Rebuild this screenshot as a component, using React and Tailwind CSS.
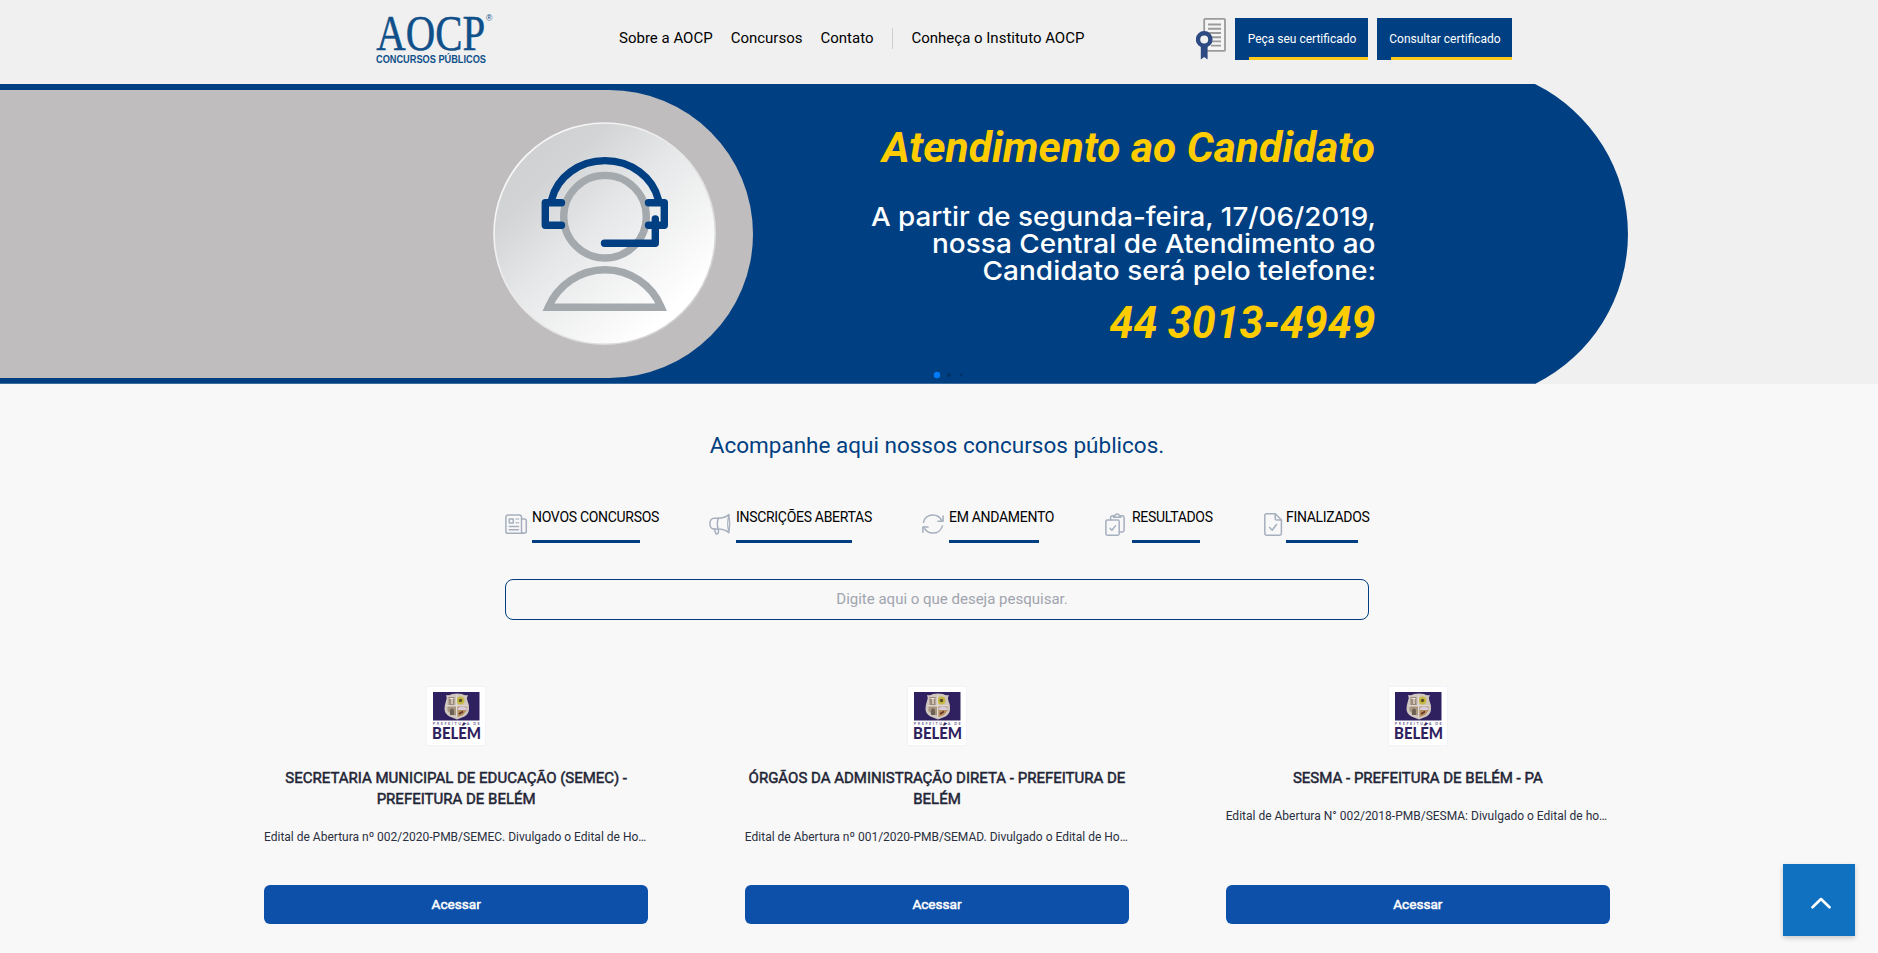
const NAV = ["Sobre a AOCP", "Concursos", "Contato"];

const CARDS = [
  {
    title: "SECRETARIA MUNICIPAL DE EDUCAÇÃO (SEMEC) - PREFEITURA DE BELÉM",
    text: "Edital de Abertura nº 002/2020-PMB/SEMEC. Divulgado o Edital de Ho…",
  },
  {
    title: "ÓRGÃOS DA ADMINISTRAÇÃO DIRETA - PREFEITURA DE BELÉM",
    text: "Edital de Abertura nº 001/2020-PMB/SEMAD. Divulgado o Edital de Ho…",
  },
  {
    title: "SESMA - PREFEITURA DE BELÉM - PA",
    text: "Edital de Abertura N° 002/2018-PMB/SESMA: Divulgado o Edital de ho…",
  },
];

function TabIcon({ children, width = 22, height = 20 }) {
  return (
    <svg
      width={width}
      height={height}
      viewBox={`0 0 ${width} ${height}`}
      className="shrink-0 overflow-visible"
      fill="none"
      stroke="#a6afbe"
      strokeWidth="1.5"
      strokeLinecap="round"
      strokeLinejoin="round"
    >
      {children}
    </svg>
  );
}

const NewsIcon = () => (
  <TabIcon>
    <path d="M3 .9h11.5a2 2 0 0 1 2 2v14.4a2 2 0 0 0 2 2H3a2.1 2.1 0 0 1-2.1-2.1V3A2.1 2.1 0 0 1 3 .9z" />
    <path d="M16.5 4.9h3a1.8 1.8 0 0 1 1.8 1.8v10.6a2 2 0 0 1-2 2h-1" />
    <rect x="4.3" y="5" width="4" height="4" />
    <path d="M11.3 5h.4M13.3 5h.2M11.3 8.8h.4M13.3 8.8h.2M4.3 12.4h9.2M4.3 15.7h9.2" />
  </TabIcon>
);

const MegaphoneIcon = () => (
  <TabIcon>
    <path d="M9.3 4.2H5.2C2.6 4.2 .9 6.7 .9 9.6s1.7 5.500 4.300 5.500h4.100" />
    <path d="M9.300 4.200C8.100 7.500 8.100 11.700 9.300 15.100c4.200 0 7.700 1.200 10.600 3.500M9.300 4.200C13.500 4.200 17 3 19.900 .6" />
    <path d="M19.900 .6C18.400 6.200 18.400 12.800 19.900 18.600c1.100-5.800 1.100-12.400 0-18z" strokeWidth="1.200" />
    <path d="M5.400 15.200l1.200 3.900a1.500 1.500 0 0 0 2.800-.5v-3.300" />
  </TabIcon>
);

const RefreshIcon = () => (
  <TabIcon>
    <path d="M1.500 8.300C2.500 3.900 6.200 .9 10.800 .9c4 0 7.500 2.400 9 6" />
    <path d="M21.100 2v5.200h-5.200" />
    <path d="M20.400 11.900c-1.100 4.200-4.900 7.200-9.400 7.200-4 0-7.500-2.300-9-5.900" />
    <path d="M.9 18.300v-5.200h5.200" />
  </TabIcon>
);

const ResultsIcon = () => (
  <TabIcon width={20} height={23}>
    <rect x=".9" y="7" width="13.300" height="15.200" rx="1.400" />
    <path d="M5.600 6.800V4.400A1.700 1.700 0 0 1 7.300 2.700h1.200M15.800 2.700h1.600a1.700 1.700 0 0 1 1.700 1.700v12.800a1.700 1.700 0 0 1-1.700 1.700h-3" />
    <path d="M8.500 4.300V2.900h1.400a2.300 2.300 0 0 1 4.500 0h1.400v1.400z" />
    <path d="M5 15.300l1.900 1.900 3.500-4.300" />
  </TabIcon>
);

const DoneIcon = () => (
  <TabIcon width={18} height={23}>
    <path d="M2.400 .8h8.800l6.200 6.200v13.600a1.600 1.600 0 0 1-1.600 1.600H2.400A1.600 1.600 0 0 1 .8 20.600V2.400A1.600 1.600 0 0 1 2.400 .8z" />
    <path d="M11.200 .8v4.600A1.600 1.600 0 0 0 12.800 7h4.600M5.600 14.600l2.600 2.700 4.300-5.800" />
  </TabIcon>
);

const TABS = [
  { label: "NOVOS CONCURSOS", Icon: NewsIcon, box: "w-[127px] ml-[5px]", bar: "w-[108px]", gap: "" },
  { label: "INSCRIÇÕES ABERTAS", Icon: MegaphoneIcon, box: "w-[136px] ml-[5px]", bar: "w-[116px]", gap: "ml-[50px]" },
  { label: "EM ANDAMENTO", Icon: RefreshIcon, box: "w-[106px] ml-[5px]", bar: "w-[90px]", gap: "ml-[50px]" },
  { label: "RESULTADOS", Icon: ResultsIcon, box: "w-[81px] ml-[7px]", bar: "w-[68px]", gap: "ml-[50px]" },
  { label: "FINALIZADOS", Icon: DoneIcon, box: "w-[85px] ml-[4px]", bar: "w-[72px]", gap: "ml-[51px]" },
];

function Logo() {
  return (
    <svg width="128" height="62" viewBox="372 6 128 62" className="shrink-0 overflow-visible" fill="#10508a">
      <text x="376.300" y="49.700" fontSize="51" textLength="109" lengthAdjust="spacingAndGlyphs" stroke="#10508a" strokeWidth=".5" className="font-['Liberation_Serif',serif]">
        AOCP
      </text>
      <text x="486" y="20.800" fontSize="8.500" className="font-['Liberation_Sans',sans-serif]">®</text>
      <text x="376" y="63" fontSize="10" fontWeight="700" textLength="110" lengthAdjust="spacingAndGlyphs" className="font-['Liberation_Sans',sans-serif]">
        CONCURSOS PÚBLICOS
      </text>
    </svg>
  );
}

function CertificateIcon() {
  return (
    <svg width="31" height="42" viewBox="1196 18 31 42" className="shrink-0">
      <rect x="1204.200" y="18.900" width="20.800" height="32" rx="1" fill="#f5f5f5" stroke="#9b9b9b" strokeWidth="1.800" />
      <path d="M1208 24.500h13M1208 28.800h13M1208 33h13M1211 37.200h10M1212 41.400h9M1211 45.600h10" stroke="#9b9b9b" strokeWidth="1.900" />
      <path d="M1200.800 46h6.800v13.500l-3.400-2.600-3.400 2.600z" fill="#2e4a82" />
      <circle cx="1204.200" cy="39.400" r="6.200" fill="#f0f0f0" stroke="#2e4a82" strokeWidth="4.400" />
    </svg>
  );
}

function CertButton({ label, width }) {
  return (
    <button className={`flex h-[42px] flex-col items-end bg-[#003f82] text-xs text-white ${width}`}>
      <span className="flex w-full grow items-center justify-center whitespace-nowrap pl-px pt-0.5">{label}</span>
      <span className="ml-3.5 h-[3px] self-stretch bg-[#ffc91c]" />
    </button>
  );
}

function Banner() {
  return (
    <svg width="1878" height="300" viewBox="0 84 1878 300" className="block">
      <defs>
        <linearGradient id="disc" x1=".15" y1=".15" x2=".8" y2=".85">
          <stop offset="0" stopColor="#cfd1d2" />
          <stop offset=".15" stopColor="#d2d4d5" />
          <stop offset=".45" stopColor="#e6e7e8" />
          <stop offset="1" stopColor="#ffffff" />
        </linearGradient>
        <linearGradient id="rim" x1="0" y1="0" x2="1" y2="1">
          <stop offset="0" stopColor="#ffffff" />
          <stop offset=".5" stopColor="#e8e8e8" />
          <stop offset="1" stopColor="#c9c9c9" />
        </linearGradient>
      </defs>
      <path d="M0 84H1535A167.500 167.500 0 0 1 1535 384H0z" fill="#003f82" />
      <path d="M0 383.500H1535" stroke="#3d6d9f" />
      <path d="M0 90H609a144 144 0 0 1 0 288H0z" fill="#c0bdbe" />
      <circle cx="604.700" cy="233.700" r="110.700" fill="url(#disc)" stroke="url(#rim)" strokeWidth="1.600" />
      <g fill="none" stroke="#a4a9ad" strokeWidth="7.400">
        <circle cx="605" cy="216.700" r="41.300" />
        <path d="M548.300 307.300H661.300C652 285 630 269.800 605 269.800S558 285 548.300 307.300z" />
      </g>
      <g fill="none" stroke="#003f82" strokeWidth="7.400" strokeLinecap="round" strokeLinejoin="round">
        <path d="M551.500 200C557 177 579 160.600 605 160.600S653 177 658.500 200" strokeLinecap="butt" />
        <path d="M561.500 202.700H545.300V225.300H561.500M648.500 202.700H664.300V225.300H648.500" />
        <path d="M655.300 219V243.300H604.500" />
      </g>
      <g fill="#ffcc00" fontStyle="italic" fontWeight="700" className="font-['Roboto',sans-serif]">
        <text x="882" y="161.700" fontSize="43" textLength="493" lengthAdjust="spacingAndGlyphs">Atendimento ao Candidato</text>
        <text x="1109.500" y="337.700" fontSize="43.500" textLength="266" lengthAdjust="spacingAndGlyphs">44 3013-4949</text>
      </g>
      <g fill="#ffffff" fontSize="26" fontWeight="500" className="font-['Inter',sans-serif]">
        <text x="871" y="226" textLength="505" lengthAdjust="spacingAndGlyphs">A partir de segunda-feira, 17/06/2019,</text>
        <text x="932" y="252.700" textLength="443.500" lengthAdjust="spacingAndGlyphs">nossa Central de Atendimento ao</text>
        <text x="982.500" y="280.300" textLength="393.500" lengthAdjust="spacingAndGlyphs">Candidato será pelo telefone:</text>
      </g>
      <circle cx="937" cy="375" r="3.200" fill="#007aff" />
      <circle cx="949" cy="375" r="2" fill="#003268" />
      <circle cx="961" cy="375" r="1.300" fill="#003268" />
    </svg>
  );
}

function BelemCrest() {
  return (
    <svg width="60" height="60" viewBox="0 0 60 60" className="shrink-0">
      <rect x=".5" y=".5" width="59" height="59" fill="#ffffff" stroke="#f2f2f8" />
      <rect x="7" y="6" width="46.500" height="28.500" fill="#2f2160" />
      <path d="M20 9q3 1 6-1 5-1 10 0 3 2 6 1-2 3-.5 6 2 4 1.500 8 0 5-4.500 7.500l-7.500 3-7.500-3Q18.500 28 18.500 23q0-4 1.500-8 1.500-3 0-6z" fill="#cfc6bd" />
      <path d="M22.500 11h6v8h-6z" fill="#9a8878" />
      <path d="M23.500 12.500h4M26 12v6" stroke="#efe8dd" strokeWidth="1.200" />
      <circle cx="34.500" cy="14.500" r="4" fill="#c8ba45" />
      <circle cx="34.500" cy="14.500" r="1.800" fill="#5d5228" />
      <path d="M21.500 20.500h8.500v9l-5-1.500-3.500-3z" fill="#a8967f" />
      <path d="M24 29v-5l2-2 2 2v5" fill="#6d6255" />
      <path d="M31.500 20.500h9v4l-3.500 4.500-5.500 2z" fill="#b98e5e" />
      <path d="M32 22q4-2.500 8.500 0v2H32z" fill="#d5cbe0" />
      <path d="M33 28l4-2.500" stroke="#60372a" strokeWidth="1.500" />
      <path d="M30.500 9v22M20.500 19.700h20.500" stroke="#e3dcd8" strokeWidth=".9" />
      <text x="6.800" y="38.500" fontSize="3.800" fontWeight="700" textLength="47" fill="#6f6690" className="font-['Lato',sans-serif]">PREFEITURA DE</text>
      <text x="6" y="53" fontSize="16" fontWeight="900" textLength="49" lengthAdjust="spacingAndGlyphs" fill="#2f2160" className="font-['Lato',sans-serif]">BELÉM</text>
    </svg>
  );
}

function Card({ title, text }) {
  return (
    <article className="flex h-[238px] flex-col items-center">
      <BelemCrest />
      <h2 className="mt-[22px] text-center text-[15px] leading-[21px] text-[#1f2536] [-webkit-text-stroke:0.5px_#1f2536]">
        {title}
      </h2>
      <p className="mt-[17px] w-full whitespace-nowrap text-left text-xs leading-[21px] text-[#2a2f3e]">{text}</p>
      <button className="mt-auto h-[39px] w-full rounded-md bg-[#0d50aa] text-[13.6px] text-white [-webkit-text-stroke:0.5px_white]">
        Acessar
      </button>
    </article>
  );
}

export default function App() {
  return (
    <div className="h-[953px] w-[1878px] overflow-hidden bg-[#f8f8f8] font-['Roboto',sans-serif]">
      <header className="flex h-[84px] bg-[#f0f0f0] pl-[372px]">
        <div className="w-[247px] pt-1.5">
          <Logo />
        </div>
        <nav className="flex h-[76px] w-[577px] items-center text-[15px] text-black">
          {NAV.map((item) => (
            <a key={item} className="mr-[18px] whitespace-nowrap">{item}</a>
          ))}
          <span className="ml-px mr-[18px] h-[21px] w-px bg-[#cfcfcf]" />
          <a className="whitespace-nowrap">Conheça o Instituto AOCP</a>
        </nav>
        <div className="flex pt-[18px]">
          <CertificateIcon />
          <div className="ml-2 flex gap-[9px]">
            <CertButton label="Peça seu certificado" width="w-[133px]" />
            <CertButton label="Consultar certificado" width="w-[135px]" />
          </div>
        </div>
      </header>

      <section className="h-[300px] bg-[#f0f0f0]">
        <Banner />
      </section>

      <main className="flex flex-col items-center pr-1">
        <h1 className="mt-[43px] text-[22.5px] leading-9 text-[#003f82]">Acompanhe aqui nossos concursos públicos.</h1>

        <div className="mt-[44px] flex h-9 w-[868px] pl-0.5">
          {TABS.map(({ label, Icon, box, bar, gap }) => (
            <a key={label} className={`flex ${gap}`}>
              <span className="flex h-[34px] items-center">
                <Icon />
              </span>
              <span className={`flex h-9 flex-col justify-between ${box}`}>
                <span className="whitespace-nowrap text-sm leading-5 tracking-[-0.3px] text-black">{label}</span>
                <span className={`h-[3px] bg-[#003f82] ${bar}`} />
              </span>
            </a>
          ))}
        </div>

        <input
          className="mt-9 h-[41px] w-[864px] rounded-lg border border-[#003f82] bg-transparent pb-0.5 pl-[30px] text-center text-[15px] placeholder:text-[#a0a4ae]"
          placeholder="Digite aqui o que deseja pesquisar."
        />

        <div className="mt-[66px] grid w-[1346px] grid-cols-3 gap-x-[96.5px]">
          {CARDS.map((card) => (
            <Card key={card.title} {...card} />
          ))}
        </div>
      </main>

      <button className="fixed bottom-[17px] right-[23px] flex h-[72px] w-[72px] items-center justify-center bg-[#0f71bf] shadow-[0_2px_5px_rgba(0,0,0,0.2)]">
        <svg width="20" height="12" viewBox="0 0 20 12" className="mt-1.5 ml-[3px]" fill="none" stroke="#ffffff" strokeWidth="2.600" strokeLinecap="round" strokeLinejoin="round">
          <path d="M1.500 10.300L10 2l8.500 8.300" />
        </svg>
      </button>
    </div>
  );
}
